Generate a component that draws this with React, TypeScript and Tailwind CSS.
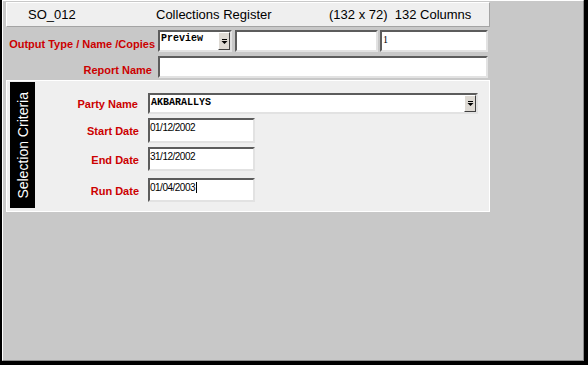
const sans = "font-['Liberation_Sans',Arial,sans-serif]";
const mono = "font-['Liberation_Mono','Courier_New',monospace]";

function Sunken({ className = "", children }: { className?: string; children?: React.ReactNode }) {
  return (
    <div
      className={`relative border-2 border-t-[#5c5c5c] border-l-[#5c5c5c] border-r-[#e2e2e2] border-b-[#e2e2e2] bg-white ${className}`}
    >
      {children}
    </div>
  );
}

function DropButton() {
  return (
    <div className="flex w-[12px] shrink-0 items-center justify-center border border-t-white border-l-white border-r-[#404040] border-b-[#404040] bg-[#dedad4]">
      <svg width="7" height="5" viewBox="0 0 7 5">
        <rect x="1" y="0" width="5" height="1" fill="#000" />
        <path d="M0.5 2 H6.5 L3.5 5 Z" fill="#000" />
      </svg>
    </div>
  );
}

function Label({ children, className = "" }: { children: React.ReactNode; className?: string }) {
  return (
    <div className={`text-right text-[11px] font-bold leading-none text-[#cc0000] ${sans} ${className}`}>
      {children}
    </div>
  );
}

const fields = [
  { label: "Start Date", value: "01/12/2002", h: "h-[25px]", mt: "mt-[4px]" },
  { label: "End Date", value: "31/12/2002", h: "h-[24px]", mt: "mt-[4px]" },
  { label: "Run Date", value: "01/04/2003", h: "h-[24px]", mt: "mt-[7px]", caret: true },
];

export default function App() {
  return (
    <div className={`flex h-[365px] w-[588px] border-b-4 border-l-2 border-r-4 border-black bg-[#c8c8c8] ${sans}`}>
      <div className="flex flex-1 flex-col border border-b-[#8a8a8a] border-l-white border-r-[#8a8a8a] border-t-white pl-[3px] pt-[1px]">
        {/* ---------- title bar ---------- */}
        <div className="flex h-[25px] w-[484px] items-center border border-b-[#a4a4a4] border-l-white border-r-[#a4a4a4] border-t-white bg-[#efefef] text-[13px] text-black">
          <span className="ml-[21px] w-[128px]">SO_012</span>
          <span className="w-[173px]">Collections Register</span>
          <span className="whitespace-pre">(132 x 72)  132 Columns</span>
        </div>

        {/* ---------- output row ---------- */}
        <div className="mt-[3px] flex h-[22px] w-[484px]">
          <Label className="w-[149px] pt-[9px]">Output Type / Name /Copies</Label>
          <Sunken className="ml-[3px] flex w-[74px] pr-0">
            <span className={`flex-1 pl-[1px] pt-[1px] text-[10px] font-bold leading-[11px] ${mono}`}>Preview</span>
            <DropButton />
          </Sunken>
          <Sunken className="ml-[3px] w-[143px]" />
          <Sunken className="ml-[2px] w-[108px]">
            <span className="block pl-[1px] pt-[2px] font-['Liberation_Serif',serif] text-[10px] leading-[11px]">1</span>
          </Sunken>
        </div>

        {/* ---------- report name ---------- */}
        <div className="mt-[4px] flex h-[22px] w-[484px]">
          <Label className="w-[146px] pt-[9px]">Report Name</Label>
          <Sunken className="ml-[6px] w-[330px]" />
        </div>

        {/* ---------- selection criteria panel ---------- */}
        <div className="mt-[2px] flex h-[132px] w-[484px] border border-white bg-[#efefef] pl-[3px] pt-[1px]">
          <div className="flex h-[126px] w-[25px] items-center justify-center bg-black">
            <span className="rotate-180 text-[14px] leading-none text-white [writing-mode:vertical-rl]">
              Selection Criteria
            </span>
          </div>

          <div className="flex flex-col pt-[11px]">
            <div className="flex h-[21px] items-center">
              <Label className="w-[103px] pt-[2px]">Party Name</Label>
              <Sunken className="ml-[10px] flex h-[21px] w-[330px]">
                <span className={`flex-1 pl-[1px] pt-[2px] text-[10px] font-bold leading-[11px] ${mono}`}>AKBARALLYS</span>
                <DropButton />
              </Sunken>
            </div>

            {fields.map((f) => (
              <div key={f.label} className={`flex items-center ${f.h} ${f.mt}`}>
                <Label className="w-[104px] pt-[2px]">{f.label}</Label>
                <Sunken className={`ml-[9px] w-[107px] ${f.h}`}>
                  <span className="flex items-center pt-[2px] text-[10px] leading-[11px] tracking-[-0.5px]">
                    {f.value}
                    {f.caret && <span className="ml-[1px] inline-block h-[11px] w-[1px] bg-black" />}
                  </span>
                </Sunken>
              </div>
            ))}
          </div>
        </div>
      </div>
    </div>
  );
}
